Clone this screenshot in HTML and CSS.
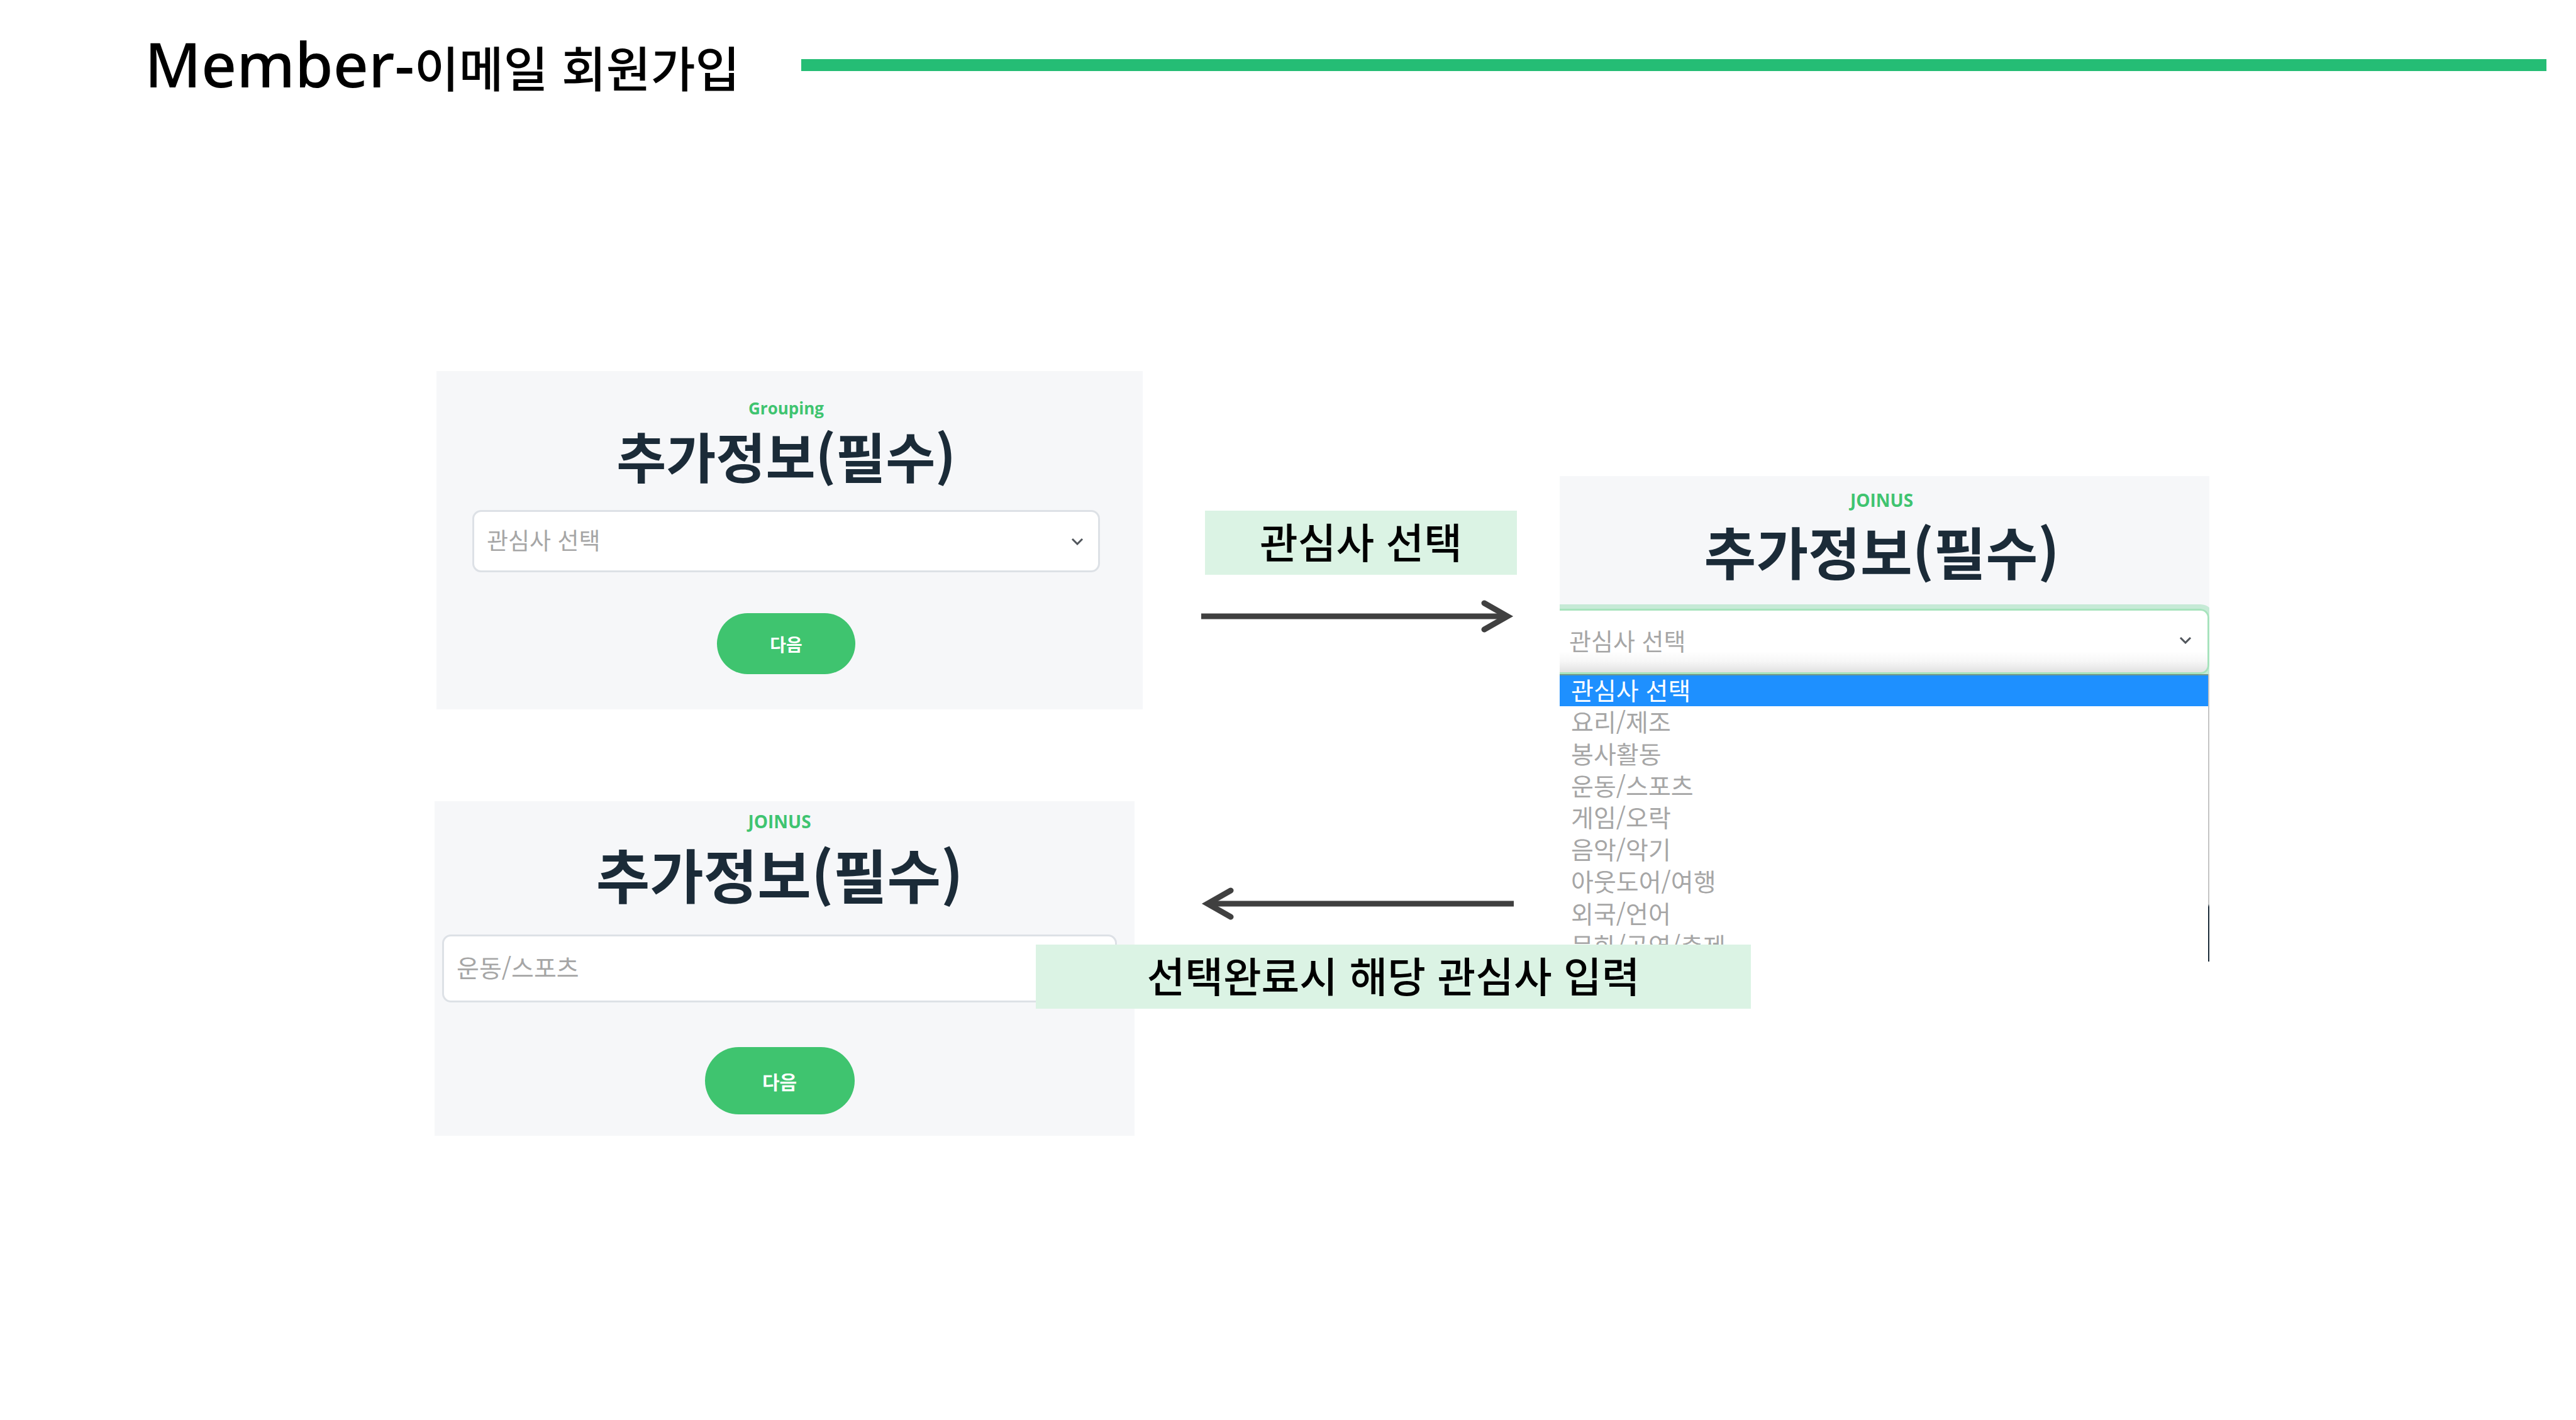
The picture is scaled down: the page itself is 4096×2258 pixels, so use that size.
FILE: index.html
```html
<!DOCTYPE html>
<html lang="ko">
<head>
<meta charset="utf-8">
<meta name="viewport" content="width=device-width, initial-scale=1">
<title>Member-이메일 회원가입</title>
<link rel="stylesheet" href="styles.css">
</head>
<body>
<header class="header">
  <h1 class="header-title"><span class="header-latin">Member-</span>이메일 회원가입</h1>
  <div class="header-rule"></div>
</header>

<main class="board">
  <section class="card card-start">
    <p class="brand">Grouping</p>
    <h2 class="card-title">추가정보(필수)</h2>
    <div class="field">
      <select class="select" aria-label="관심사"><option>관심사 선택</option></select>
      <svg class="chevron" viewBox="0 0 20 12" aria-hidden="true"><path d="M2 2l8 8 8-8"/></svg>
    </div>
    <button class="next" type="button">다음</button>
  </section>

  <section class="card card-done">
    <p class="brand">JOINUS</p>
    <h2 class="card-title">추가정보(필수)</h2>
    <div class="field">
      <select class="select" aria-label="관심사"><option>운동/스포츠</option></select>
      <svg class="chevron" viewBox="0 0 20 12" aria-hidden="true"><path d="M2 2l8 8 8-8"/></svg>
    </div>
    <button class="next" type="button">다음</button>
  </section>

  <div class="flow">
    <p class="label">관심사 선택</p>
    <svg class="arrow" viewBox="0 0 502 52" aria-hidden="true"><path class="arrow-line" d="M0 26H486"/><path class="arrow-head" d="M450 5L487 26L450 47"/></svg>
    <svg class="arrow arrow-back" viewBox="0 0 502 52" aria-hidden="true"><path class="arrow-line" d="M16 26H497"/><path class="arrow-head" d="M47 5L10 26L47 47"/></svg>
  </div>

  <section class="card card-open">
    <p class="brand">JOINUS</p>
    <h2 class="card-title">추가정보(필수)</h2>
    <div class="field">
      <select class="select" aria-label="관심사"><option>관심사 선택</option></select>
      <svg class="chevron" viewBox="0 0 20 12" aria-hidden="true"><path d="M2 2l8 8 8-8"/></svg>
    </div>
    <ul class="options" role="listbox" aria-label="관심사">
      <li class="option option-active" role="option" aria-selected="true">관심사 선택</li>
      <li class="option" role="option">요리/제조</li>
      <li class="option" role="option">봉사활동</li>
      <li class="option" role="option">운동/스포츠</li>
      <li class="option" role="option">게임/오락</li>
      <li class="option" role="option">음악/악기</li>
      <li class="option" role="option">아웃도어/여행</li>
      <li class="option" role="option">외국/언어</li>
      <li class="option" role="option">문화/공연/축제</li>
    </ul>
  </section>

  <p class="label label-done">선택완료시 해당 관심사 입력</p>
</main>
</body>
</html>
```
FILE: styles.css
```css
* {
  box-sizing: border-box;
}

body {
  margin: 0;
  background: #fff;
  color: #000;
  font-family: "Noto Sans CJK KR", "Noto Sans", sans-serif;
}

h1, h2, p, ul {
  margin: 0;
  padding: 0;
}

/* Slide header */
.header {
  display: flex;
  align-items: center;
  gap: 98px;
  height: 206px;
  padding: 0 47px 0 230px;
}

.header-title {
  font-size: 77px;
  font-weight: 500;
  line-height: 120px;
  white-space: nowrap;
}

.header-latin {
  font-family: "Noto Sans", sans-serif;
  font-size: 98px;
  font-weight: 500;
}

.header-rule {
  flex: 1;
  height: 19px;
  background: #25bd75;
}

/* Board: three steps joined by arrows */
.board {
  display: grid;
  grid-template-columns:
    691fr [done-start] 3fr [start-start] 953fr [note-start] 157fr [done-end]
    13fr [start-end] 93fr [flow-start] 502fr [flow-end] 68fr [open-start]
    304fr [note-end] 729fr [open-end] 583fr;
  row-gap: 146px;
  align-items: start;
  padding-top: 384px;
}

.card {
  display: flex;
  flex-direction: column;
  align-items: center;
  min-width: 0;
  background: #f6f7f9;
}

.brand {
  color: #3fc470;
  font-family: "Open Sans", sans-serif;
  font-size: 28px;
  font-weight: 700;
  line-height: 40px;
}

.card-title {
  color: #1b2b38;
  font-weight: 700;
  white-space: nowrap;
}

.field {
  position: relative;
  width: 100%;
}

.select {
  display: block;
  width: 100%;
  margin: 0;
  padding: 0 20px 6px;
  border: 3px solid #dde1e6;
  border-radius: 14px;
  background: #fff;
  color: #a6a6a6;
  font-family: inherit;
  font-weight: 400;
  appearance: none;
}

.chevron {
  position: absolute;
  top: 44px;
  right: 26px;
  width: 20px;
  height: 12px;
  fill: none;
  stroke: #50555b;
  stroke-width: 3;
}

.next {
  padding: 0;
  border: 0;
  border-radius: 54px;
  background: #3fc46f;
  color: #fff;
  font-family: inherit;
  font-weight: 700;
}

.card-start {
  grid-column: start-start / start-end;
  grid-row: 1;
  padding: 39px 68px 56px 57px;
}

.card-start .brand {
  font-size: 26px;
}

.card-start .card-title {
  margin-bottom: 32px;
  font-size: 86px;
  line-height: 110px;
}

.card-start .select {
  height: 99px;
  font-size: 37px;
}

.card-start .next {
  width: 220px;
  height: 97px;
  margin-top: 65px;
  font-size: 28px;
}

.card-done {
  grid-column: done-start / done-end;
  grid-row: 2;
  padding: 12px 28px 34px 12px;
}

.card-done .card-title {
  margin-bottom: 34px;
  font-size: 93px;
  line-height: 126px;
}

.card-done .select {
  height: 108px;
  font-size: 39px;
}

.card-done .next {
  width: 238px;
  height: 107px;
  margin-top: 71px;
  font-size: 30px;
}

.card-open {
  grid-column: open-start / open-end;
  grid-row: 1 / 3;
  margin-top: 167px;
  padding-top: 18px;
  overflow: hidden;
}

.card-open .brand,
.card-open .card-title {
  margin-right: 9px;
}

.card-open .card-title {
  margin-bottom: 33px;
  font-size: 90px;
  line-height: 120px;
}

.card-open .field {
  width: calc(100% + 20px);
  margin-left: -20px;
}

.card-open .select {
  height: 104px;
  padding-left: 32px;
  border-color: #a7e3bd;
  background: linear-gradient(#fff 66%, #f7f7f7 82%, #e2e2e2);
  box-shadow: 0 0 0 7px #c6ead6;
  font-size: 38px;
}

.card-open .chevron {
  right: 28px;
}

/* Open drop-down list */
.options {
  position: relative;
  display: grid;
  grid-template-rows: repeat(9, 1fr);
  width: 100%;
  height: 457px;
  padding-right: 2px;
  background: linear-gradient(#c4c4c4 80%, #1b2b38 81%) right / 2px 100% no-repeat #fff;
  list-style: none;
}

.option {
  display: flex;
  align-items: center;
  min-height: 0;
  padding: 0 18px 4px;
  color: #a6a6a6;
  font-size: 39px;
  line-height: 46px;
}

.option-active {
  border-top: 2px solid #6f9488;
  background: #1e90ff;
  color: #fff;
}

/* Arrows and captions */
.flow {
  grid-column: flow-start / flow-end;
  grid-row: 1 / 3;
  margin-top: 222px;
}

.label {
  height: 102px;
  background: #dbf3e4;
  font-size: 66px;
  font-weight: 500;
  line-height: 94px;
  text-align: center;
  white-space: nowrap;
}

.flow .label {
  margin-left: 6px;
}

.arrow {
  display: block;
  width: 100%;
  margin-top: 40px;
  fill: none;
  stroke: #404040;
}

.arrow-back {
  margin-top: 405px;
}

.arrow-line {
  stroke-width: 9;
}

.arrow-head {
  stroke-width: 9;
  stroke-linecap: round;
}

.label-done {
  z-index: 1;
  grid-column: note-start / note-end;
  grid-row: 1 / 3;
  margin-top: 912px;
}
```
